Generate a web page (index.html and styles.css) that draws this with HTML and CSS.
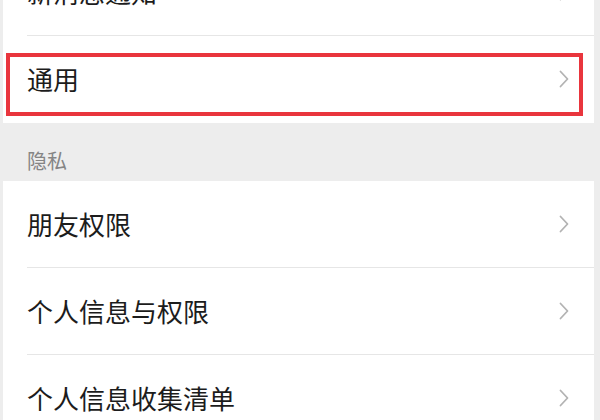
FILE: index.html
```html
<!DOCTYPE html>
<html lang="zh-CN">
<head>
<meta charset="utf-8">
<link rel="stylesheet" href="styles.css">
</head>
<body>
<div class="page">
  <div class="group">
    <div class="cell">
      <div class="cell-body">
        <span class="label">新消息通知</span>
        <svg class="chev" viewBox="0 0 10 18" width="10" height="18"><polyline points="1.5,1.5 8.5,9 1.5,16.5"/></svg>
      </div>
    </div>
    <div class="cell highlighted">
      <div class="cell-body">
        <span class="label">通用</span>
        <svg class="chev" viewBox="0 0 10 18" width="10" height="18"><polyline points="1.5,1.5 8.5,9 1.5,16.5"/></svg>
      </div>
      <div class="mark"></div>
    </div>
  </div>
  <div class="section-title">隐私</div>
  <div class="group">
    <div class="cell">
      <div class="cell-body">
        <span class="label">朋友权限</span>
        <svg class="chev" viewBox="0 0 10 18" width="10" height="18"><polyline points="1.5,1.5 8.5,9 1.5,16.5"/></svg>
      </div>
    </div>
    <div class="cell">
      <div class="cell-body">
        <span class="label">个人信息与权限</span>
        <svg class="chev" viewBox="0 0 10 18" width="10" height="18"><polyline points="1.5,1.5 8.5,9 1.5,16.5"/></svg>
      </div>
    </div>
    <div class="cell">
      <div class="cell-body">
        <span class="label">个人信息收集清单</span>
        <svg class="chev" viewBox="0 0 10 18" width="10" height="18"><polyline points="1.5,1.5 8.5,9 1.5,16.5"/></svg>
      </div>
    </div>
  </div>
</div>
</body>
</html>
```

FILE: styles.css
```css
html, body {
  margin: 0;
  padding: 0;
  background: #ededed;
  font-family: "Noto Sans CJK SC", "Noto Sans", sans-serif;
  overflow: hidden;
}

.page {
  margin-top: -51px;
  width: 600px;
}

.group {
  background: #ffffff;
  margin: 0 6px 0 3px;
}

.cell {
  position: relative;
  padding-left: 24px;
}

.cell-body {
  display: flex;
  align-items: center;
  justify-content: space-between;
  height: 86px;
  padding-right: 25px;
  border-bottom: 1px solid #e6e6e6;
}

.cell:last-child .cell-body {
  border-bottom: 1px solid transparent;
}

.label {
  font-size: 26px;
  color: #1c1c1c;
  line-height: 1;
}

.chev {
  display: block;
}

.chev polyline {
  fill: none;
  stroke: #b3b3b3;
  stroke-width: 1.8;
  stroke-linecap: round;
  stroke-linejoin: round;
}

.mark {
  position: absolute;
  left: 3px;
  top: 17px;
  right: 11px;
  bottom: 7px;
  border: 4px solid #e9353d;
}

.section-title {
  height: 58px;
  box-sizing: border-box;
  padding: 26px 0 0 27px;
  font-size: 20px;
  line-height: 24px;
  color: #858585;
}
```
